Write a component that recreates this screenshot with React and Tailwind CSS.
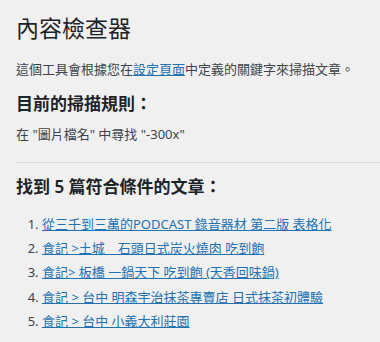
const links = [
  "從三千到三萬的PODCAST 錄音器材 第二版 表格化",
  "食記 >土城　石頭日式炭火燒肉 吃到飽",
  "食記> 板橋 一鍋天下 吃到飽 (天香回味鍋)",
  "食記 > 台中 明森宇治抹茶專賣店 日式抹茶初體驗",
  "食記 > 台中 小義大利莊園",
];

export default function App() {
  return (
    <div
      className="min-h-[342px] bg-[#f0f0f1] pl-4 text-[#3c434a]"
      style={{ fontFamily: '"Noto Sans", "Noto Sans CJK TC", sans-serif' }}
    >
      <h1 className="pt-[13px] text-[23px] leading-[30px] font-normal text-[#1d2327]">
        內容檢查器
      </h1>

      <p className="mt-[17px] text-[13px] leading-[19.5px]">
        這個工具會根據您在
        <a href="#" className="text-[#2271b1] underline">設定頁面</a>
        中定義的關鍵字來掃描文章。
      </p>

      <h2 className="mt-[13px] text-[17px] leading-[22px] font-semibold text-[#1d2327]">
        目前的掃描規則：
      </h2>

      <p className="mt-[10px] text-[13px] leading-[19.5px]">
        在 "圖片檔名" 中尋找 "-300x"
      </p>

      <hr className="mt-[18px] border-0 border-t border-[#dcdcde]" />

      <h2 className="mt-[13px] text-[17px] leading-[22px] font-semibold text-[#1d2327]">
        找到 5 篇符合條件的文章：
      </h2>

      <ol className="mt-[17px] list-decimal pl-[26px] text-[13px] leading-[18.2px]">
        {links.map((title, i) => (
          <li key={i} className="mb-[6px]">
            <a href="#" className="text-[#2271b1] underline whitespace-pre">
              {title}
            </a>
          </li>
        ))}
      </ol>
    </div>
  );
}
